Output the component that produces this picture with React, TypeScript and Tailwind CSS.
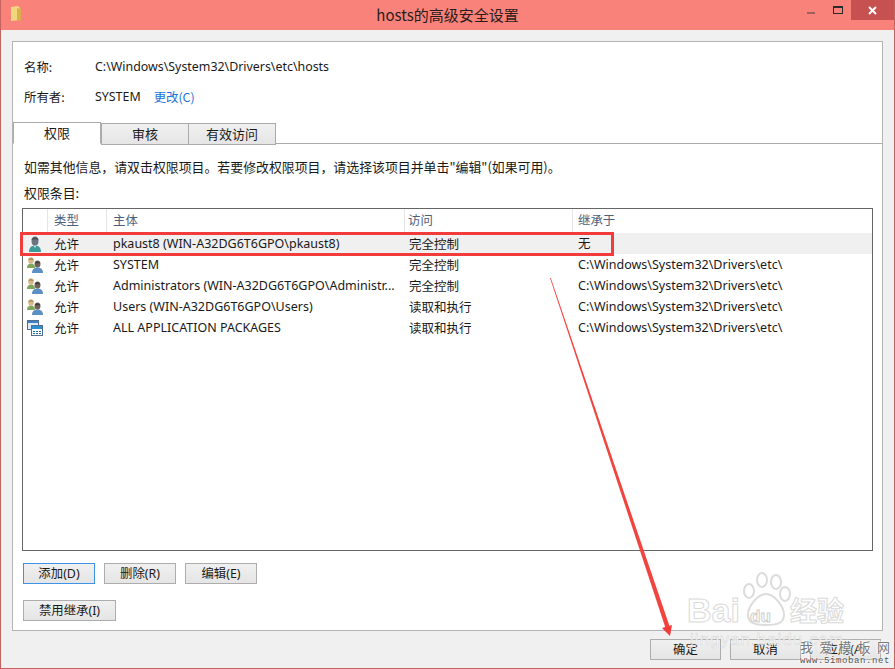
import React from 'react';

const ui = { fontFamily: '"Noto Sans", "Noto Sans CJK SC", sans-serif' };
const cjk = { fontFamily: '"Noto Sans CJK SC", "Noto Sans", sans-serif' };
const sans = { fontFamily: '"Liberation Sans", sans-serif' };
const etc = 'C:\\Windows\\System32\\Drivers\\etc\\';
const hint = '如需其他信息\uFF0C请双击权限项目。若要修改权限项目\uFF0C请选择该项目并单击"编辑"(如果可用)。';

type Row = { icon: 'user' | 'group' | 'apps'; name: string; access: string; from: string; selected?: boolean };

const rows: Row[] = [
  { icon: 'user', name: 'pkaust8 (WIN-A32DG6T6GPO\\pkaust8)', access: '完全控制', from: '无', selected: true },
  { icon: 'group', name: 'SYSTEM', access: '完全控制', from: etc },
  { icon: 'group', name: 'Administrators (WIN-A32DG6T6GPO\\Administr...', access: '完全控制', from: etc },
  { icon: 'group', name: 'Users (WIN-A32DG6T6GPO\\Users)', access: '读取和执行', from: etc },
  { icon: 'apps', name: 'ALL APPLICATION PACKAGES', access: '读取和执行', from: etc },
];

const RowIcon = ({ kind }: { kind: Row['icon'] }) => {
  if (kind === 'user') {
    return (
      <svg width="16" height="16" viewBox="0 0 16 16">
        <path d="M2 16c0-4.500 2.500-6.500 6-6.500s6 2 6 6.500z" fill="#3f9a9a" />
        <path d="M6.500 9.500 8 12l1.500-2.500z" fill="#d5e5e5" />
        <ellipse cx="8" cy="5" rx="3.500" ry="4.500" fill="#6b7480" />
        <path d="M4.500 4c.5-3 6-3.500 7 0-2-1-5-1-7 0z" fill="#434b55" />
      </svg>
    );
  }
  if (kind === 'group') {
    return (
      <svg width="16" height="16" viewBox="0 0 16 16">
        <path d="M0 11c0-3 1.500-4.500 4-4.500s4 1.500 4 4.500z" fill="#7fa65a" />
        <ellipse cx="4" cy="3.500" rx="2.800" ry="3.200" fill="#d6b98a" />
        <path d="M1.500 3c.5-2.500 4.500-2.500 5 0-1.500-.8-3.500-.8-5 0z" fill="#a5814f" />
        <path d="M5 16c0-4 2.500-5.500 5.500-5.500S16 12 16 16z" fill="#5c8fc4" />
        <ellipse cx="10.500" cy="7" rx="3" ry="3.500" fill="#6d625a" />
        <path d="M8 6.500c.5-3 4.500-3 5 0-1.500-.8-3.500-.8-5 0z" fill="#3f3833" />
      </svg>
    );
  }
  return (
    <svg width="16" height="16" viewBox="0 0 16 16">
      <rect x="0.500" y="0.500" width="11" height="9" fill="#dfeaf5" stroke="#51708f" />
      <rect x="1" y="1" width="10" height="2" fill="#3b7fc4" />
      <rect x="4.500" y="5.500" width="11" height="10" fill="#fff" stroke="#51708f" />
      <rect x="5" y="6" width="10" height="3" fill="#2a8fd0" />
      <path d="M6 11h2v1H6zm3 0h2v1H9zm3 0h2v1h-2zM6 13h2v1H6zm3 0h2v1H9zm3 0h2v1h-2z" fill="#1f6fa8" />
    </svg>
  );
};

const Btn = ({ label, width, focused }: { label: string; width: string; focused?: boolean }) => (
  <button
    className={`${width} h-[21px] border ${focused ? 'border-[#3c93e8]' : 'border-[#adadad]'} bg-gradient-to-b from-[#f0f0f0] to-[#e5e5e5] text-[12.4px] leading-[19px] text-[#1a1a1a]`}
    style={ui}
  >
    {label}
  </button>
);

const Tab = ({ label, active }: { label: string; active?: boolean }) => (
  <div
    className={`w-[88px] h-[22px] border border-[#ababab] text-center text-[13px] leading-[20px] text-[#1a1a1a] last:-ml-px ${
      active ? 'relative z-10 bg-white border-b-white' : 'bg-gradient-to-b from-[#f0f0f0] to-[#e5e5e5] mt-px'
    }`}
    style={cjk}
  >
    {label}
  </div>
);

export default function App() {
  return (
    <div className="relative w-[895px] h-[669px] overflow-hidden" style={ui}>
      <div className="flex flex-col h-full bg-[#f0f0f0] border-x border-b border-[#c4635e]">
        {/* title bar */}
        <div className="relative flex items-center justify-center h-[30px] shrink-0 bg-[#f9827a]">
          <svg className="absolute left-[9px] top-[5px]" width="13" height="17" viewBox="0 0 13 17">
            <path d="M1 2l7-1 2 2v12l-9 1z" fill="#f0d77e" />
            <path d="M7 3l4 1v11l-4 1z" fill="#d9b04c" />
          </svg>
          <span className="text-[15px] text-[#2a1c1b]" style={cjk}>hosts的高级安全设置</span>
          <div className="absolute right-0 top-0 flex items-start">
            <div className="w-[8px] h-[2px] mt-[12px] mr-[18px] bg-[#a0605a]" />
            <div className="w-[10px] h-[8px] mt-[6px] mr-[8px] border border-[#2b2b2b] border-t-[2px]" />
            <div className="flex items-center justify-center w-[43px] h-[20px] bg-[#c75050] text-white">
              <svg width="9" height="9" viewBox="0 0 9 9">
                <path d="M1 1l7 7M8 1L1 8" stroke="#fff" strokeWidth="2" />
              </svg>
            </div>
          </div>
        </div>

        {/* main panel */}
        <div className="flex-1 flex flex-col mx-[11px] mt-[11px] bg-white border border-[#b4b4b4] min-h-0">
          <div className="px-[11px] pt-[16px] h-[80px] shrink-0 text-[12.4px] text-[#1a1a1a]">
            <div className="flex h-[18px] items-center">
              <span className="w-[71px]" style={cjk}>名称:</span>
              <span>C:\Windows\System32\Drivers\etc\hosts</span>
            </div>
            <div className="flex h-[18px] items-center mt-[12px]">
              <span className="w-[71px]" style={cjk}>所有者:</span>
              <span>SYSTEM</span>
              <span className="ml-[13px] text-[#1a73d9]" style={cjk}>更改(C)</span>
            </div>
          </div>

          <div className="flex shrink-0 border-b border-[#ababab] h-[22px]">
            <Tab label="权限" active />
            <Tab label="审核" />
            <Tab label="有效访问" />
          </div>

          <div className="flex-1 flex flex-col px-[9px] min-h-0">
            <p className="mt-[14px] ml-[2px] h-[18px] text-[12.9px] leading-[18px] text-[#1a1a1a] whitespace-nowrap" style={cjk}>
              {hint}
            </p>
            <p className="mt-[8px] ml-[2px] h-[18px] text-[12.9px] leading-[18px] text-[#1a1a1a]" style={cjk}>权限条目:</p>

            <div className="mt-[6px] h-[343px] shrink-0 border border-[#666] overflow-hidden">
              <div className="flex h-[24px] text-[12.4px] leading-[22px] text-[#4c607a]" style={cjk}>
                <div className="w-[25px] h-[23px] border-r border-[#e5e5e5]" />
                <div className="w-[59px] h-[23px] pl-[6px] border-r border-[#e5e5e5]">类型</div>
                <div className="w-[298px] h-[23px] pl-[6px] border-r border-[#e5e5e5]">主体</div>
                <div className="w-[168px] h-[23px] pl-[3px] border-r border-[#e5e5e5]">访问</div>
                <div className="flex-1 pl-[5px]">继承于</div>
              </div>
              {rows.map(row => (
                <div
                  key={row.name}
                  className={`flex items-center h-[21px] text-[12.5px] text-[#1a1a1a] ${row.selected ? 'bg-[#f0f0f0]' : ''}`}
                >
                  <div className="w-[25px] pl-[4px] flex items-center"><RowIcon kind={row.icon} /></div>
                  <div className="w-[59px] pl-[6px] pt-[2px]" style={cjk}>允许</div>
                  <div className="w-[298px] pl-[6px] pt-[2px] whitespace-nowrap">{row.name}</div>
                  <div className="w-[168px] pl-[4px] pt-[2px]" style={cjk}>{row.access}</div>
                  <div className="flex-1 pl-[5px] pt-[2px] whitespace-nowrap">{row.from}</div>
                </div>
              ))}
            </div>

            <div className="flex gap-[9px] mt-[12px] ml-px">
              <Btn label="添加(D)" width="w-[72px]" focused />
              <Btn label="删除(R)" width="w-[72px]" />
              <Btn label="编辑(E)" width="w-[72px]" />
            </div>
            <div className="mt-[13px] ml-px">
              <Btn label="禁用继承(I)" width="w-[93px]" />
            </div>
          </div>
        </div>

        {/* footer */}
        <div className="flex justify-end gap-[9px] h-[37px] shrink-0 pt-[8px] pr-[13px]">
          <Btn label="确定" width="w-[71px]" />
          <Btn label="取消" width="w-[71px]" />
          <Btn label="应用(A)" width="w-[71px]" />
        </div>
      </div>

      {/* red annotation box */}
      <div className="absolute left-[20px] top-[232px] w-[594px] h-[24px] border-[3px] border-[#f23b3b]" />

      {/* red arrow */}
      <svg className="absolute inset-0 pointer-events-none" width="895" height="669" viewBox="0 0 895 669">
        <path d="M550 278L550.800 278 669.500 626 665.500 628z" fill="#f2443f" />
        <path d="M670 636L662 628 672 625z" fill="#f23b3b" />
      </svg>

      {/* Baidu watermark */}
      <div className="absolute left-[685px] top-[572px] w-[170px] h-[80px] pointer-events-none">
        <svg className="absolute left-[55px] top-0" width="52" height="56" viewBox="0 0 52 56" fill="none" stroke="#dcdcdc" strokeWidth="2">
          <ellipse cx="9" cy="19" rx="5" ry="7" fill="#fff" />
          <ellipse cx="22" cy="8" rx="5" ry="7" fill="#fff" />
          <ellipse cx="36" cy="10" rx="5" ry="7" fill="#fff" />
          <ellipse cx="45" cy="22" rx="5" ry="7" fill="#fff" />
          <path d="M26 22c-8 0-18 12-18 21 0 9 9 10 18 10s18-1 18-10c0-9-10-21-18-21z" fill="#fff" />
        </svg>
        <span className="absolute left-[2px] top-[21px] text-[34px] leading-[35px] font-bold text-white [-webkit-text-stroke:1px_#dadada]" style={sans}>Bai</span>
        <span className="absolute left-[65px] top-[36px] text-[17px] leading-[17px] font-bold text-white [-webkit-text-stroke:1px_#d0d0d0]" style={sans}>du</span>
        <span className="absolute left-[105px] top-[22px] text-[27px] leading-[32px] font-bold text-white [-webkit-text-stroke:1px_#dadada]" style={cjk}>经验</span>
        <span className="absolute left-[5px] top-[58px] text-[17px] leading-[20px] tracking-[1px] text-white/70 [-webkit-text-stroke:0.5px_#d6d6d6]" style={sans}>jingyan.baidu.com</span>
      </div>

      {/* site watermark */}
      <div className="absolute left-[800px] top-[638px] w-[90px] pointer-events-none">
        <div className="flex justify-between text-[13px] leading-[18px] text-[#777] [text-shadow:0_0_2px_#fff,0_0_3px_#fff,0_0_3px_#fff]" style={cjk}>
          <span>我</span><span>爱</span><span>模</span><span>板</span><span>网</span>
        </div>
        <div className="text-[9px] leading-[11px] tracking-[0.6px] whitespace-nowrap text-[#555] [text-shadow:0_0_2px_#fff,0_0_2px_#fff]" style={{ fontFamily: '"Liberation Mono", monospace' }}>www.5imoban.net</div>
      </div>
    </div>
  );
}
